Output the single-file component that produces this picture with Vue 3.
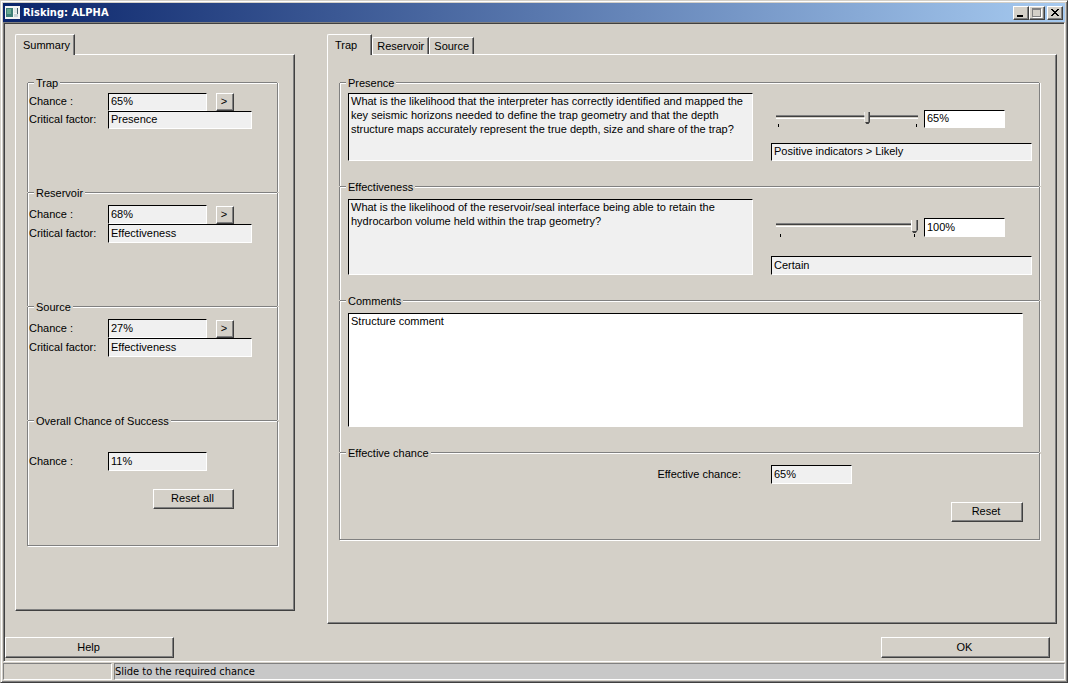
<script setup>
import { reactive, ref } from 'vue'

const summary = reactive([
  { id: 'trap', name: 'Trap', chance: '65%', factor: 'Presence' },
  { id: 'reservoir', name: 'Reservoir', chance: '68%', factor: 'Effectiveness' },
  { id: 'source', name: 'Source', chance: '27%', factor: 'Effectiveness' },
])

const questions = reactive([
  {
    id: 'presence',
    name: 'Presence',
    text: 'What is the likelihood that the interpreter has correctly identified and mapped the key seismic horizons needed to define the trap geometry and that the depth structure maps accurately represent the true depth, size and share of the trap?',
    value: 65,
    verdict: 'Positive indicators > Likely',
  },
  {
    id: 'effectiveness',
    name: 'Effectiveness',
    text: 'What is the likelihood of the reservoir/seal interface being able to retain the hydrocarbon volume held within the trap geometry?',
    value: 100,
    verdict: 'Certain',
  },
])

const tabs = ['Trap', 'Reservoir', 'Source']
const activeTab = ref('Trap')
const comments = ref('Structure comment')
</script>

<template>
  <div class="window">
    <header class="titlebar">
      <svg class="app-icon" viewBox="0 0 15 13" width="15" height="13" aria-hidden="true">
        <rect width="15" height="13" fill="#f4f4f4" />
        <rect x="1" y="2" width="7" height="9" fill="#3f7f78" />
        <rect x="2" y="3" width="4" height="5" fill="#68a890" />
        <rect x="9" y="2" width="4" height="5" fill="#dfe8e8" />
        <rect x="9" y="8" width="4" height="3" fill="#c8d4d8" />
        <rect x="12" y="2" width="1" height="6" fill="#46606c" />
      </svg>
      <h1>Risking: ALPHA</h1>
      <div class="window-buttons">
        <button type="button" aria-label="Minimize">
          <svg viewBox="0 0 12 10" width="12" height="10"><path d="M2 7h6v2H2z" fill="#000" /></svg>
        </button>
        <button type="button" aria-label="Maximize" disabled>
          <svg viewBox="0 0 12 10" width="12" height="10">
            <path d="M2 1h9v9H2z" fill="#fff" />
            <path d="M1 0h9v9H1z" fill="#808080" />
            <path d="M2 2h7v6H2z" fill="#d4d0c8" />
          </svg>
        </button>
        <button type="button" class="close" aria-label="Close">
          <svg viewBox="0 0 12 10" width="12" height="10" shape-rendering="crispEdges">
            <path
              d="M2 1h2v1h1v1h2V2h1V1h2v1H9v1H8v1H7v1h1v1h1v1h1v1H8V7H7V6H5v1H4v1H2V7h1V6h1V5h1V4H4V3H3V2H2z"
              fill="#000"
            />
          </svg>
        </button>
      </div>
    </header>

    <div class="client">
      <main class="panels">
        <section class="tab-set summary">
          <div class="tabs" role="tablist">
            <button type="button" role="tab" class="tab active" aria-selected="true">Summary</button>
          </div>
          <div class="page">
            <div class="frame">
              <fieldset v-for="item in summary" :key="item.id" class="group risk">
                <legend>{{ item.name }}</legend>
                <div class="row">
                  <label :for="item.id + '-chance'">Chance :</label>
                  <input :id="item.id + '-chance'" class="field short" type="text" readonly :value="item.chance" />
                  <button type="button" class="push go" :aria-label="'Open ' + item.name">&gt;</button>
                </div>
                <div class="row">
                  <label :for="item.id + '-factor'">Critical factor:</label>
                  <input :id="item.id + '-factor'" class="field medium" type="text" readonly :value="item.factor" />
                </div>
              </fieldset>
              <fieldset class="group overall">
                <legend>Overall Chance of Success</legend>
                <div class="row">
                  <label for="overall-chance">Chance :</label>
                  <input id="overall-chance" class="field short" type="text" readonly value="11%" />
                </div>
                <button type="button" class="push reset-all">Reset all</button>
              </fieldset>
            </div>
          </div>
        </section>

        <section class="tab-set detail">
          <div class="tabs" role="tablist">
            <button
              v-for="tab in tabs"
              :key="tab"
              type="button"
              role="tab"
              class="tab"
              :class="{ active: tab === activeTab }"
              :aria-selected="tab === activeTab"
              @click="activeTab = tab"
            >{{ tab }}</button>
          </div>
          <div class="page">
            <div class="frame">
              <fieldset v-for="q in questions" :key="q.id" class="group question" :class="q.id">
                <legend>{{ q.name }}</legend>
                <div class="columns">
                  <textarea class="field text" readonly :aria-label="q.name + ' question'" :value="q.text"></textarea>
                  <div class="answer">
                    <div class="chance">
                      <div class="slider">
                        <input v-model.number="q.value" type="range" min="0" max="100" :aria-label="q.name + ' chance'" />
                      </div>
                      <input class="field editable percent" type="text" :aria-label="q.name + ' percent'" :value="q.value + '%'" />
                    </div>
                    <input class="field" type="text" readonly :aria-label="q.name + ' rating'" :value="q.verdict" />
                  </div>
                </div>
              </fieldset>
              <fieldset class="group comments">
                <legend>Comments</legend>
                <textarea v-model="comments" class="field text editable" aria-label="Comments"></textarea>
              </fieldset>
              <fieldset class="group effective">
                <legend>Effective chance</legend>
                <div class="columns">
                  <label for="effective-chance">Effective chance:</label>
                  <input id="effective-chance" class="field percent" type="text" readonly value="65%" />
                </div>
                <button type="button" class="push reset">Reset</button>
              </fieldset>
            </div>
          </div>
        </section>
      </main>

      <div class="actions">
        <button type="button" class="push wide">Help</button>
        <button type="button" class="push wide">OK</button>
      </div>
    </div>

    <footer class="status">
      <span class="cell"></span>
      <span class="cell message">Slide to the required chance</span>
    </footer>
  </div>
</template>

<style>
body {
  margin: 0;
  background: #d4d0c8;
}
</style>

<style scoped>
.window,
.window * {
  box-sizing: border-box;
}

.window {
  display: flex;
  flex-direction: column;
  min-height: 100vh;
  padding: 1px;
  border: 1px solid;
  border-color: #d4d0c8 #404040 #404040 #d4d0c8;
  background: #d4d0c8;
  box-shadow: inset 1px 1px #fff, inset -1px -1px #808080;
  color: #000;
  font: 11px/14px "Liberation Sans", Arial, sans-serif;
}

button,
input,
textarea {
  margin: 0;
  border-radius: 0;
  color: inherit;
  font: inherit;
}

/* Title bar */
.titlebar {
  display: flex;
  align-items: center;
  height: 19px;
  margin: 1px 1px 0;
  padding: 0 2px;
  background: linear-gradient(90deg, #0a246a, #a6caf0);
}

.app-icon {
  flex: none;
}

h1 {
  flex: 1;
  margin: 0 0 0 3px;
  color: #fff;
  font: bold 11px/14px "DejaVu Sans Condensed", "DejaVu Sans", sans-serif;
}

.window-buttons {
  display: flex;
}

.window-buttons button {
  width: 16px;
  height: 14px;
  padding: 1px;
  border: 1px solid;
  border-color: #fff #404040 #404040 #fff;
  background: #d4d0c8;
  box-shadow: inset -1px -1px #808080;
}

.window-buttons .close {
  margin-left: 2px;
}

.window-buttons svg {
  display: block;
}

/* Client area */
.client {
  display: flex;
  flex: 1;
  flex-direction: column;
  margin: 0 1px;
  border: 1px solid;
  border-color: #808080 #fff #fff #808080;
  box-shadow: inset 1px 1px #404040;
}

.panels {
  display: flex;
  flex: 1;
  gap: 32px;
  align-items: flex-start;
  padding: 11px 7px 0 11px;
}

.summary {
  flex: none;
  width: 280px;
}

.detail {
  flex: 1;
  min-width: 0;
}

.tabs {
  display: flex;
  align-items: flex-end;
  height: 21px;
  margin-bottom: -1px;
}

.tab {
  position: relative;
  height: 17px;
  margin-bottom: 1px;
  padding: 0 4px;
  border: solid;
  border-width: 1px 1px 0;
  border-color: #fff #404040 #fff #fff;
  border-radius: 2px 0 0 0;
  background: #d4d0c8;
  box-shadow: inset -1px 0 #808080;
  line-height: 16px;
}

.tab.active {
  height: 21px;
  margin-bottom: 0;
  padding: 0 4px 0 7px;
  line-height: 18px;
}

.detail .active {
  padding: 0 14px 0 7px;
}

.page {
  padding: 27px 16px 64px 11px;
  border: 1px solid;
  border-color: #fff #404040 #404040 #fff;
  box-shadow: inset -1px -1px #808080;
}

.detail .page {
  padding-bottom: 82px;
}

/* Etched frame holding stacked groups */
.group {
  min-width: 0;
  margin: 0;
  padding: 0;
  border: solid #808080;
  border-width: 0 1px;
  box-shadow: 1px 0 #fff, inset 1px 0 #fff;
}

.group:last-child {
  border-bottom-width: 1px;
  box-shadow: 1px 1px #fff, inset 1px 0 #fff;
}

legend {
  display: flex;
  align-items: center;
  width: 100%;
  height: 2px;
  padding: 0;
  white-space: nowrap;
}

legend::before,
legend::after {
  width: 6px;
  height: 2px;
  margin-right: 2px;
  background: linear-gradient(#808080 1px, #fff 1px);
  content: "";
}

legend::after {
  flex: 1;
  margin: 0 0 0 2px;
}

/* Controls */
.field {
  display: block;
  width: 100%;
  height: 19px;
  padding: 0 2px 2px;
  border: 1px solid;
  border-color: #000 #fff #fff #000;
  outline: none;
  background: #f0f0f0;
}

.editable {
  background: #fff;
}

.text {
  overflow: hidden;
  padding: 0 2px;
  resize: none;
}

.push {
  height: 20px;
  padding: 0 2px 2px 0;
  border: 1px solid;
  border-color: #fff #404040 #404040 #fff;
  background: #d4d0c8;
  box-shadow: inset -1px -1px #808080;
}

.row {
  display: flex;
  align-items: center;
}

.row label {
  width: 80px;
  padding: 0 0 2px 1px;
}

.short {
  width: 99px;
}

.medium {
  width: 144px;
}

.percent {
  width: 81px;
}

.go {
  width: 18px;
  height: 18px;
  margin-left: 9px;
}

.risk {
  height: 114px;
  padding-top: 11px;
}

.risk:first-child {
  height: 110px;
  padding-top: 9px;
}

.risk:first-child .field {
  height: 18px;
}

.overall {
  height: 126px;
  padding-top: 30px;
}

.reset-all {
  display: block;
  width: 81px;
  margin: 18px 0 0 125px;
}

/* Detail page */
.detail .group {
  padding-right: 7px;
}

.detail .group > legend {
  width: calc(100% + 7px);
}

.columns {
  display: grid;
  grid-template-columns: minmax(0, 1fr) 261px;
  gap: 18px;
  margin-left: 8px;
}

.presence {
  height: 104px;
}

.presence .columns {
  padding-top: 9px;
}

.presence .text {
  height: 68px;
}

.effectiveness {
  height: 114px;
}

.effectiveness .columns {
  padding-top: 11px;
}

.effectiveness .text {
  height: 76px;
}

.answer {
  display: flex;
  flex-direction: column;
  justify-content: space-between;
}

.chance {
  display: flex;
  justify-content: space-between;
  padding: 17px 27px 0 5px;
}

.presence .field:not(.text) {
  height: 18px;
}

.effectiveness .chance {
  padding-top: 19px;
}

.slider {
  width: 142px;
  height: 19px;
  padding-top: 2px;
  background:
    linear-gradient(#000, #000) 2px 14px / 1px 3px no-repeat,
    linear-gradient(#000, #000) 140px 14px / 1px 3px no-repeat;
}

.slider input {
  display: block;
  width: 100%;
  height: 12px;
  appearance: none;
  background: linear-gradient(#808080 1px, #404040 1px 2px, #d4d0c8 2px 3px, #fff 3px) 0 3px / 100% 4px no-repeat;
}

.slider input::-webkit-slider-thumb {
  width: 6px;
  height: 12px;
  appearance: none;
  background:
    linear-gradient(transparent 10px, #404040 10px),
    linear-gradient(90deg, #fff 1px, #d4d0c8 1px 4px, #808080 4px 5px, #404040 5px);
  clip-path: polygon(0 0, 100% 0, 100% 75%, 67% 100%, 33% 100%, 0 75%);
}

.effectiveness .slider {
  background-position: 4px 16px, 138px 16px;
}

.effectiveness .slider input {
  height: 13px;
}

.effectiveness .slider input::-webkit-slider-thumb {
  width: 7px;
  height: 13px;
  background:
    linear-gradient(transparent 11px, #404040 11px),
    linear-gradient(90deg, #fff 1px, #d4d0c8 1px 5px, #808080 5px 6px, #404040 6px);
}

.comments {
  height: 152px;
}

.comments .text {
  width: calc(100% - 17px);
  height: 114px;
  margin: 11px 0 0 8px;
}

.effective {
  height: 88px;
}

.effective .columns {
  align-items: center;
  padding-top: 11px;
}

.effective label {
  padding: 0 12px 2px 0;
  text-align: right;
}

.reset {
  display: block;
  width: 72px;
  margin: 18px 9px 0 auto;
}

.detail .page {
  padding-bottom: 83px;
}

.actions {
  display: flex;
  justify-content: space-between;
  padding: 0 14px 3px 1px;
}

.wide {
  width: 169px;
  height: 21px;
}

/* Status bar */
.status {
  display: flex;
  gap: 2px;
  height: 17px;
  margin: 1px;
  font: 11px/16px "DejaVu Sans Condensed", "DejaVu Sans", sans-serif;
}

.cell {
  width: 109px;
  border: 1px solid;
  border-color: #808080 #fff #fff #808080;
}

.message {
  flex: 1;
  background: #c8c8c8;
}
</style>
